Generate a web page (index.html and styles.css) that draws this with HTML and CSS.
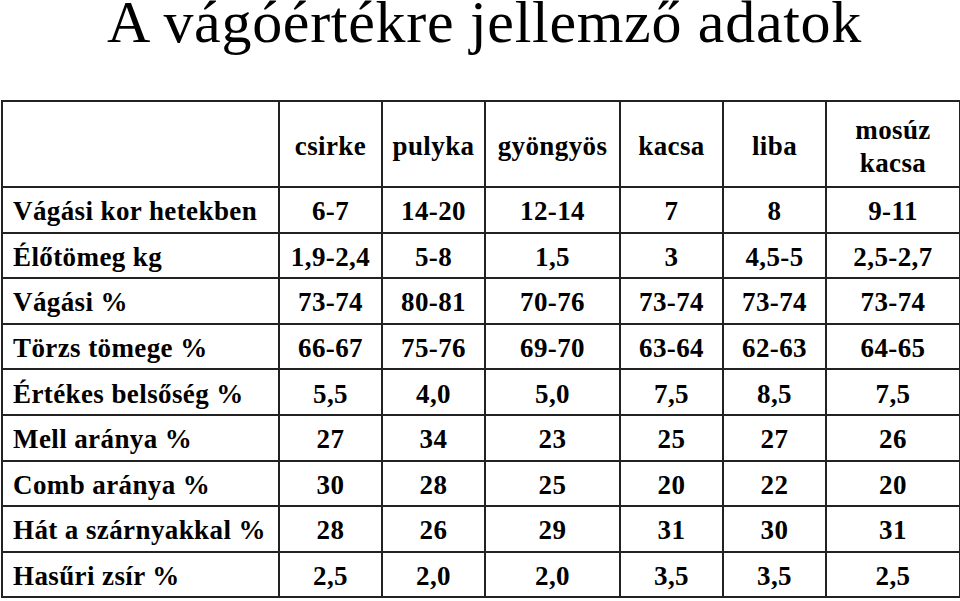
FILE: index.html
```html
<!DOCTYPE html>
<html lang="hu">
<head>
<meta charset="utf-8">
<link rel="stylesheet" href="styles.css">
</head>
<body>
<h1 class="title">A vágóértékre jellemző adatok</h1>
<table class="data">
  <colgroup>
    <col class="c-label"><col class="c-n"><col class="c-n"><col class="c-w"><col class="c-n"><col class="c-n"><col class="c-w2">
  </colgroup>
  <thead>
    <tr class="head"><th></th><th>csirke</th><th>pulyka</th><th>gyöngyös</th><th>kacsa</th><th>liba</th><th>mosúz<br>kacsa</th></tr>
  </thead>
  <tbody>
    <tr><th>Vágási kor hetekben</th><td>6-7</td><td>14-20</td><td>12-14</td><td>7</td><td>8</td><td>9-11</td></tr>
    <tr><th>Élőtömeg kg</th><td>1,9-2,4</td><td>5-8</td><td>1,5</td><td>3</td><td>4,5-5</td><td>2,5-2,7</td></tr>
    <tr><th>Vágási %</th><td>73-74</td><td>80-81</td><td>70-76</td><td>73-74</td><td>73-74</td><td>73-74</td></tr>
    <tr><th>Törzs tömege %</th><td>66-67</td><td>75-76</td><td>69-70</td><td>63-64</td><td>62-63</td><td>64-65</td></tr>
    <tr><th>Értékes belsőség %</th><td>5,5</td><td>4,0</td><td>5,0</td><td>7,5</td><td>8,5</td><td>7,5</td></tr>
    <tr><th>Mell aránya %</th><td>27</td><td>34</td><td>23</td><td>25</td><td>27</td><td>26</td></tr>
    <tr><th>Comb aránya %</th><td>30</td><td>28</td><td>25</td><td>20</td><td>22</td><td>20</td></tr>
    <tr><th>Hát a szárnyakkal %</th><td>28</td><td>26</td><td>29</td><td>31</td><td>30</td><td>31</td></tr>
    <tr><th>Hasűri zsír %</th><td>2,5</td><td>2,0</td><td>2,0</td><td>3,5</td><td>3,5</td><td>2,5</td></tr>
  </tbody>
</table>
</body>
</html>
```
FILE: styles.css
```css
html, body {
  margin: 0;
  padding: 0;
  background: #fff;
}
body {
  font-family: "Liberation Serif", "Times New Roman", serif;
  color: #000;
}
.title {
  margin: 0;
  padding-left: 107px;
  height: 100px;
  font-weight: normal;
  font-size: 60px;
  line-height: 45px;
  letter-spacing: 0.7px;
  white-space: nowrap;
}
.data {
  margin-left: 1px;
  border-collapse: collapse;
  table-layout: fixed;
  width: 958px;
  font-size: 27px;
  letter-spacing: 0.4px;
  font-weight: bold;
}
.c-label { width: 277px; }
.c-n { width: 103px; }
.c-w { width: 135px; }
.c-w2 { width: 134px; }
.data th, .data td {
  border: 2px solid #222;
  padding: 3px 0 0;
  height: 40.6px;
  text-align: center;
  vertical-align: middle;
  line-height: 30px;
}
.data tbody th {
  text-align: left;
  padding-left: 10px;
  white-space: nowrap;
}
.data .head th {
  height: 79px;
  padding-top: 5px;
  line-height: 33px;
}
```
